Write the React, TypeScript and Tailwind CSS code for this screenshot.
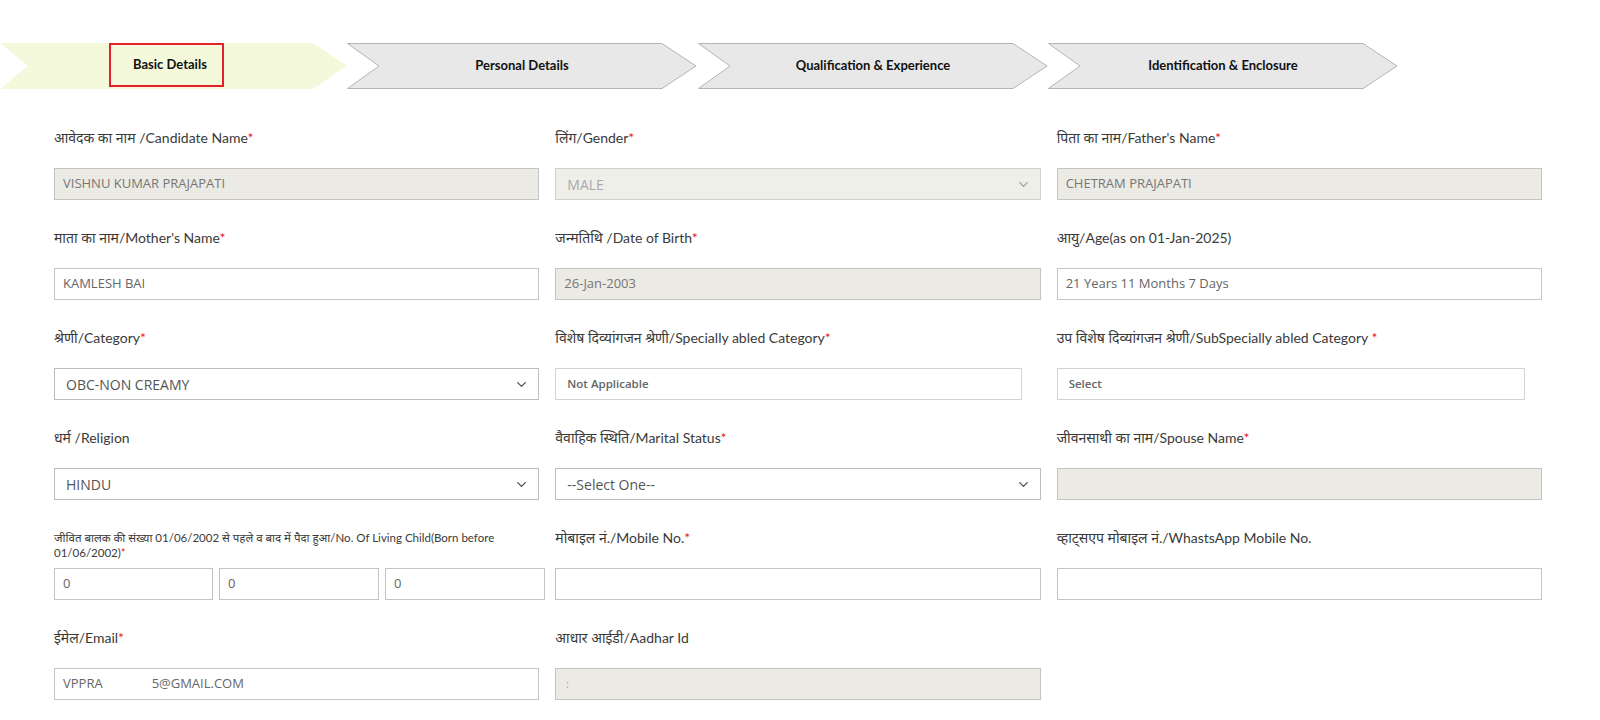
import React from 'react';
import { ChevronDown } from 'lucide-react';

type Step = { label: string; w: string; ml?: string };

const steps: Step[] = [
  { label: 'Personal Details', w: 'w-[350px]' },
  { label: 'Qualification & Experience', w: 'w-[350px]', ml: 'ml-[1px]' },
  { label: 'Identification & Enclosure', w: 'w-[350px]' },
];

function Label({ children, req = false }: { children: React.ReactNode; req?: boolean }) {
  return (
    <div className="h-[38px] text-[14px] leading-[16px] text-[#3a3a3a] font-[Lato,'Noto_Sans',sans-serif]">
      {children}
      {req && <span className="text-[#e8202a]">*</span>}
    </div>
  );
}

// plain text input look
function TextBox({
  value = '',
  disabled = false,
  className = 'w-full',
}: {
  value?: React.ReactNode;
  disabled?: boolean;
  className?: string;
}) {
  return (
    <div
      className={`${className} h-[32px] border flex items-center pl-[8px] text-[13px] font-['Open_Sans',sans-serif] whitespace-pre ${
        disabled ? 'bg-[#ebeae4] border-[#c4c4c4] text-[#777]' : 'bg-white border-[#c4c4c4] text-[#666]'
      }`}
    >
      {value}
    </div>
  );
}

function SelectBox({ value, disabled = false }: { value: string; disabled?: boolean }) {
  return (
    <div
      className={`w-full h-[32px] border flex items-center justify-between pl-[11px] pr-[9px] text-[14px] font-['Open_Sans',sans-serif] ${
        disabled ? 'bg-[#efefea] border-[#d0d0cc] text-[#a9a9a9]' : 'bg-white border-[#bdbdbd] text-[#555]'
      }`}
    >
      <span>{value}</span>
      <ChevronDown size={15} strokeWidth={2.2} className={disabled ? 'text-[#a0a0a0]' : 'text-[#555]'} />
    </div>
  );
}

function SmallBox({ value, className }: { value: string; className: string }) {
  return (
    <div
      className={`${className} h-[32px] border border-[#d9d0d0] bg-white flex items-center pl-[11px] text-[11.5px] font-semibold text-[#666] font-['Open_Sans',sans-serif]`}
    >
      {value}
    </div>
  );
}

function Field({ children }: { children: React.ReactNode }) {
  return <div className="flex flex-col mb-[30px]">{children}</div>;
}

function Stepper() {
  return (
    <div className="flex h-[46px] font-[Lato,'Noto_Sans',sans-serif]">
      <div className="relative w-[347px] h-[46px] shrink-0">
        <svg className="absolute inset-0" width="347" height="46" viewBox="0 0 347 46">
          <polygon points="0,0 313,0 347,23 313,46 0,46 28,23" fill="#f4f9dc" />
        </svg>
        <div className="absolute left-[109px] top-0 w-[115px] h-[44px] border-2 border-[#e4202a] flex items-center pl-[22px] text-[13px] font-bold text-[#111]">
          Basic Details
        </div>
      </div>
      {steps.map((s) => (
        <div key={s.label} className={`relative ${s.w} ${s.ml ?? ''} h-[46px] shrink-0`}>
          <svg className="absolute inset-0" width="350" height="46" viewBox="0 0 350 46">
            <polygon
              points="0.5,0.5 315,0.5 349,23 315,45.5 0.5,45.5 32,23"
              fill="#e8e8e8"
              stroke="#b4b4b4"
              strokeWidth="1"
            />
          </svg>
          <div className="relative h-full flex items-center justify-center text-[13px] font-bold text-[#111]">
            {s.label}
          </div>
        </div>
      ))}
    </div>
  );
}

export default function App() {
  return (
    <div className="w-[1600px] h-[720px] bg-white pt-[43px] overflow-hidden">
      <Stepper />
      <div className="pl-[54px] w-[1542px] mt-[41px] grid grid-cols-3 gap-x-[16px]">
        {/* row 1 */}
        <Field>
          <Label req>आवेदक का नाम /Candidate Name</Label>
          <TextBox value="VISHNU KUMAR PRAJAPATI" disabled />
        </Field>
        <Field>
          <Label req>लिंग/Gender</Label>
          <SelectBox value="MALE" disabled />
        </Field>
        <Field>
          <Label req>पिता का नाम/Father's Name</Label>
          <TextBox value="CHETRAM PRAJAPATI" disabled />
        </Field>

        {/* row 2 */}
        <Field>
          <Label req>माता का नाम/Mother's Name</Label>
          <TextBox value="KAMLESH BAI" />
        </Field>
        <Field>
          <Label req>जन्मतिथि /Date of Birth</Label>
          <TextBox value="26-Jan-2003" disabled />
        </Field>
        <Field>
          <Label>आयु/Age(as on 01-Jan-2025)</Label>
          <TextBox value="21 Years 11 Months 7 Days" />
        </Field>

        {/* row 3 */}
        <Field>
          <Label req>श्रेणी/Category</Label>
          <SelectBox value="OBC-NON CREAMY" />
        </Field>
        <Field>
          <Label req>विशेष दिव्यांगजन श्रेणी/Specially abled Category</Label>
          <SmallBox value="Not Applicable" className="w-[467px]" />
        </Field>
        <Field>
          <Label>
            उप विशेष दिव्यांगजन श्रेणी/SubSpecially abled Category{' '}
            <span className="text-[#e8202a]">*</span>
          </Label>
          <SmallBox value="Select" className="w-[468px]" />
        </Field>

        {/* row 4 */}
        <Field>
          <Label>धर्म /Religion</Label>
          <SelectBox value="HINDU" />
        </Field>
        <Field>
          <Label req>वैवाहिक स्थिति/Marital Status</Label>
          <SelectBox value="--Select One--" />
        </Field>
        <Field>
          <Label req>जीवनसाथी का नाम/Spouse Name</Label>
          <TextBox disabled />
        </Field>

        {/* row 5 */}
        <Field>
          <div className="h-[38px] text-[11.5px] leading-[15px] text-[#3a3a3a] font-[Lato,'Noto_Sans',sans-serif]">
            <span className="whitespace-nowrap">
              जीवित बालक की संख्या 01/06/2002 से पहले व बाद में पैदा हुआ/No. Of Living Child(Born before
            </span>
            <br />
            01/06/2002)<span className="text-[#e8202a]">*</span>
          </div>
          <div className="flex gap-[6px] w-[491px]">
            <TextBox value="0" className="w-[159px]" />
            <TextBox value="0" className="w-[160px]" />
            <TextBox value="0" className="w-[160px]" />
          </div>
        </Field>
        <Field>
          <Label req>मोबाइल नं./Mobile No.</Label>
          <TextBox />
        </Field>
        <Field>
          <Label>व्हाट्सएप मोबाइल नं./WhastsApp Mobile No.</Label>
          <TextBox />
        </Field>

        {/* row 6 */}
        <Field>
          <Label req>ईमेल/Email</Label>
          <TextBox
            value={
              <>
                <span>VPPRA</span>
                <span className="ml-[49px]">5@GMAIL.COM</span>
              </>
            }
          />
        </Field>
        <Field>
          <Label>आधार आईडी/Aadhar Id</Label>
          <TextBox disabled value={<span className="text-[#c8905a] text-[10px] pl-[2px]">:</span>} />
        </Field>
        <div />
      </div>
    </div>
  );
}
